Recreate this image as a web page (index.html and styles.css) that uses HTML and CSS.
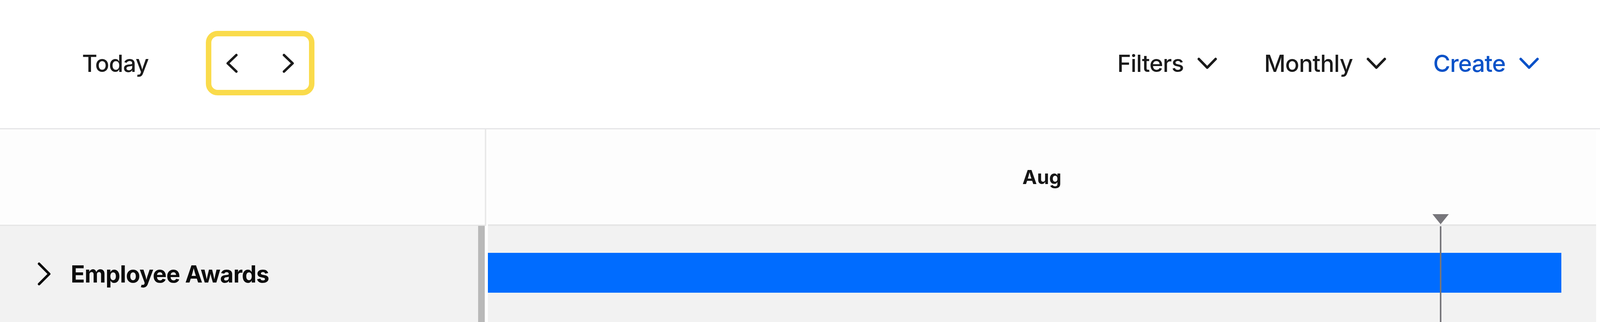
FILE: index.html
```html
<!DOCTYPE html>
<html lang="en">
<head>
    <meta charset="UTF-8">
    <meta name="viewport" content="width=device-width, initial-scale=1.0">
    <title>Timeline</title>
    <link rel="stylesheet" href="styles.css">
</head>
<body>
    <header class="toolbar">
        <div class="toolbar-left">
            <button class="today-btn">Today</button>
            <div class="pager">
                <button class="pager-btn" aria-label="Previous">
                    <svg width="32" height="50" viewBox="0 0 32 50"><path d="M27 4 L5 25 L27 46"/></svg>
                </button>
                <button class="pager-btn" aria-label="Next">
                    <svg width="32" height="50" viewBox="0 0 32 50"><path d="M5 4 L27 25 L5 46"/></svg>
                </button>
            </div>
        </div>
        <div class="toolbar-right">
            <button class="menu-btn">Filters
                <svg width="51" height="32" viewBox="0 0 51 32"><path d="M4 5 L25.5 27 L47 5"/></svg>
            </button>
            <button class="menu-btn">Monthly
                <svg width="51" height="32" viewBox="0 0 51 32"><path d="M4 5 L25.5 27 L47 5"/></svg>
            </button>
            <button class="menu-btn create">Create
                <svg width="51" height="32" viewBox="0 0 51 32"><path d="M4 5 L25.5 27 L47 5"/></svg>
            </button>
        </div>
    </header>

    <main class="board">
        <div class="side">
            <div class="side-head"></div>
            <div class="side-row">
                <div class="row-label">
                    <svg class="expand" width="40" height="60" viewBox="0 0 40 60"><path d="M7 4 L33 30 L7 56"/></svg>
                    <span>Employee Awards</span>
                </div>
                <div class="scrollbar"></div>
            </div>
        </div>
        <div class="timeline">
            <div class="months"><span>Aug</span></div>
            <div class="track">
                <div class="bar" style="width: 96.86%"></div>
            </div>
            <!-- today marker -->
            <div class="today-marker" style="left: 85.97%"></div>
            <div class="today-line" style="left: 85.97%"></div>
        </div>
    </main>
</body>
</html>
```

FILE: styles.css
```css
* {
    box-sizing: border-box;
}
body {
    margin: 0;
    height: 100vh;
    display: flex;
    flex-direction: column;
    overflow: hidden;
    background: white;
    font-family: Inter, "Noto Sans", sans-serif;
    color: #1a1a1a;
}
button {
    font: inherit;
    color: inherit;
    background: none;
    border: none;
    padding: 0;
    cursor: pointer;
}
svg path {
    fill: none;
    stroke: currentColor;
    stroke-width: 6.5;
    stroke-linecap: round;
    stroke-linejoin: round;
}

.toolbar {
    flex: none;
    height: 331px;
    padding: 0 3.81vw 5px 5.13vw;
    display: flex;
    align-items: center;
    justify-content: space-between;
    border-bottom: 3px solid #e5e5e7;
}
.toolbar-left {
    display: flex;
    align-items: center;
    gap: 3.57vw;
}
.today-btn,
.menu-btn {
    font-size: 60px;
    font-weight: 500;
    letter-spacing: -1px;
}
.pager {
    width: 278px;
    height: 165px;
    padding: 0 37px;
    border: 14px solid #fadb4b;
    border-radius: 30px;
    display: flex;
    align-items: center;
    justify-content: space-between;
}
.pager-btn {
    display: flex;
}
.toolbar-right {
    display: flex;
    align-items: center;
    gap: 120px;
}
.menu-btn {
    display: flex;
    align-items: center;
    gap: 35px;
}
.menu-btn.create {
    color: #0a52c8;
}

.board {
    flex: 1;
    display: flex;
}
.side {
    width: 30.39%;
    flex: none;
    display: flex;
    flex-direction: column;
}
.side-head {
    height: 247px;
    border-right: 4px solid #e9e9e9;
    border-bottom: 3px solid #e6e6e6;
    background: #fdfdfd;
}
.side-row {
    flex: 1;
    margin-right: 4px;
    display: flex;
}
.row-label {
    flex: 1;
    display: flex;
    align-items: center;
    gap: 48px;
    padding-left: 93px;
    background: #f2f2f2;
    font-size: 60px;
    font-weight: 700;
    letter-spacing: -1px;
    color: #0d0d0d;
}
.scrollbar {
    width: 17px;
    background: #b9b9b9;
}

.timeline {
    position: relative;
    flex: 1;
    display: flex;
    flex-direction: column;
    margin: 0 10px 0 4px;
}
.months {
    height: 247px;
    display: flex;
    align-items: center;
    justify-content: center;
    border-bottom: 4px solid #e6e6e6;
    background: #fdfdfd;
    font-size: 50px;
    font-weight: 700;
    color: #161616;
}
.track {
    flex: 1;
    display: flex;
    align-items: center;
    padding-bottom: 6px;
    background: #f2f2f2;
}
.bar {
    height: 102px;
    background: #006cff;
}
.today-marker {
    position: absolute;
    top: 217px;
    width: 0;
    height: 0;
    margin-left: -21px;
    border-left: 21px solid transparent;
    border-right: 21px solid transparent;
    border-top: 26px solid #77767b;
}
.today-line {
    position: absolute;
    top: 248px;
    bottom: 0;
    width: 4px;
    margin-left: -2px;
    background: #77767b;
}
```
